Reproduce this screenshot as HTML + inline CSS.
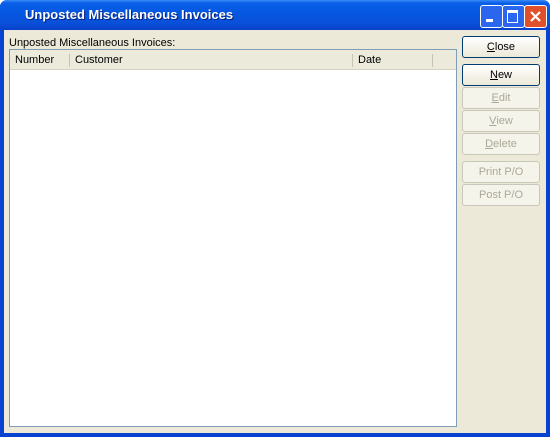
<!DOCTYPE html>
<html><head><style>
body{margin:0;width:550px;height:437px;overflow:hidden;font-family:Tahoma,"Liberation Sans",sans-serif;font-size:11px;}
.win{position:absolute;left:0;top:0;width:550px;height:437px;background:#0842d0;border-radius:7px 7px 0 0;}
.title{position:absolute;left:0;top:0;width:550px;height:30px;border-radius:7px 7px 0 0;background:linear-gradient(#3a8cf8 0,#0a5ee8 3px,#0557e0 14px,#0a4fd8 24px,#0840c8 30px);}
.title span{position:absolute;left:25px;top:7px;color:#fff;font-weight:bold;font-size:13px;text-shadow:1px 1px #0a1f7a;}
.body{position:absolute;left:4px;top:30px;width:542px;height:403px;background:#ece9d8;}
.lbl{position:absolute;left:9px;top:37px;color:#000;}
.list{position:absolute;left:9px;top:49px;width:446px;height:376px;border:1px solid #7f9db9;background:#fff;}
.hdr{position:absolute;left:0;top:0;width:446px;height:19px;background:#ebeadb;border-bottom:1px solid #d6d2c2;}
.hdr div{position:absolute;top:4px;}
.sep{position:absolute;top:3px;width:1px;height:13px;background:#c7c5b2;}
.btn{position:absolute;left:462px;width:76px;height:20px;border:1px solid #003c74;border-radius:3px;background:linear-gradient(#fff,#ece9d8);text-align:center;line-height:20px;color:#000;}
.dis{border-color:#c9c7ba;color:#aca899;background:#f5f4ea;}
.tb{position:absolute;top:5px;width:21px;height:21px;border:1px solid #fff;border-radius:3px;background:#2a66ee;}
</style></head><body>
<div class="win"><div class="title"><span>Unposted Miscellaneous Invoices</span></div>
<div class="tb" style="left:480px"><div style="position:absolute;left:5px;top:13px;width:7px;height:3px;background:#fff"></div></div>
<div class="tb" style="left:502px"><div style="position:absolute;left:4px;top:4px;width:9px;height:9px;border:1px solid #fff;border-top-width:3px"></div></div>
<div class="tb" style="left:524px;background:#e0502a"><svg width="21" height="21" style="position:absolute;left:0;top:0"><path d="M6 6L15 15M15 6L6 15" stroke="#fff" stroke-width="2.2"/></svg></div>
<div class="body"></div></div>
<div class="lbl">Unposted Miscellaneous Invoices:</div>
<div class="list"><div class="hdr">
<div style="left:5px">Number</div><div class="sep" style="left:59px"></div>
<div style="left:65px">Customer</div><div class="sep" style="left:342px"></div>
<div style="left:348px">Date</div><div class="sep" style="left:422px"></div>
</div></div>
<div class="btn" style="top:36px"><u>C</u>lose</div>
<div class="btn" style="top:64px"><u>N</u>ew</div>
<div class="btn dis" style="top:87px"><u>E</u>dit</div>
<div class="btn dis" style="top:110px"><u>V</u>iew</div>
<div class="btn dis" style="top:133px"><u>D</u>elete</div>
<div class="btn dis" style="top:161px">Print P/O</div>
<div class="btn dis" style="top:184px">Post P/O</div>
</body></html>
